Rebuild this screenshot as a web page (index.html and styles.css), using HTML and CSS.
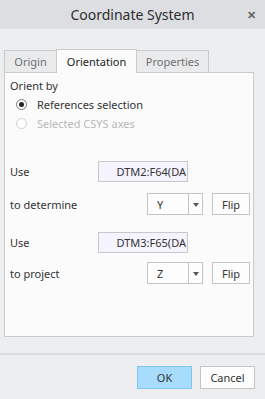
FILE: index.html
```html
<!DOCTYPE html>
<html>
<head>
<meta charset="utf-8">
<link rel="stylesheet" href="styles.css">
</head>
<body>
<div class="dialog">
  <div class="titlebar">
    <span class="title">Coordinate System</span>
    <span class="close">&#x2715;</span>
  </div>
  <div class="content">
    <div class="tabs">
      <div class="tab">Origin</div>
      <div class="tab active">Orientation</div>
      <div class="tab">Properties</div>
    </div>
    <div class="panel">
      <div class="legend">Orient by</div>
      <div class="radio-row"><span class="radio checked"></span><span>References selection</span></div>
      <div class="radio-row disabled"><span class="radio"></span><span>Selected CSYS axes</span></div>
      <div class="group first">
        <div class="row"><span class="label">Use</span><span class="input">DTM2:F64(DA</span></div>
        <div class="row row2"><span class="label">to determine</span><span class="select"><span class="val">Y</span><span class="arrow"></span></span><span class="btn">Flip</span></div>
      </div>
      <div class="group second">
        <div class="row"><span class="label">Use</span><span class="input">DTM3:F65(DA</span></div>
        <div class="row row2"><span class="label">to project</span><span class="select"><span class="val">Z</span><span class="arrow"></span></span><span class="btn">Flip</span></div>
      </div>
    </div>
  </div>
  <div class="footer">
    <span class="btn ok">OK</span>
    <span class="btn cancel">Cancel</span>
  </div>
</div>
</body>
</html>
```
FILE: styles.css
```css
html, body { margin: 0; padding: 0; }
body {
  width: 265px; height: 399px; overflow: hidden;
  background: #edeef0;
  font-family: "Noto Sans", "Open Sans", sans-serif;
  font-size: 11px;
  color: #333;
}
.dialog { display: flex; flex-direction: column; height: 399px; }
.titlebar {
  height: 29px; background: #dcdee1;
  display: flex; align-items: center; justify-content: center;
  position: relative;
}
.title { font-size: 14px; color: #2e2e2e; }
.close {
  position: absolute; right: 9px; top: 7px;
  font-size: 11px; font-weight: bold; color: #666;
}
.content { padding: 20px 11px 0 4px; }
.tabs { display: flex; height: 23px; align-items: flex-end; }
.tab {
  height: 22px; box-sizing: border-box;
  border: 1px solid #cbcbcb; border-bottom: none;
  background: #e9eaec; color: #707070;
  display: flex; align-items: center; justify-content: center;
  margin-right: -1px;
}
.tab:first-child { width: 53px; }
.tab.active {
  background: #fbfbfb; color: #222;
  position: relative; z-index: 1; margin-bottom: -1px; height: 24px;
  width: 81px;
}
.tab:last-child { width: 73px; }
.panel {
  height: 265px; box-sizing: border-box;
  border: 1px solid #cbcbcb; background: #fbfbfb;
  padding: 5px 0 0 5px;
}
.legend { height: 16px; line-height: 16px; }
.radio-row {
  display: flex; align-items: center; height: 19px; margin-left: 6px;
}
.radio-row:nth-child(2) { margin-top: 1px; }
.radio {
  width: 11px; height: 11px; box-sizing: border-box;
  border: 1px solid #777; border-radius: 50%; background: #fff;
  margin-right: 10px; position: relative;
}
.radio.checked::after {
  content: ""; position: absolute; left: 2px; top: 2px;
  width: 5px; height: 5px; border-radius: 50%; background: #222;
}
.disabled { color: #b8b8b8; }
.disabled .radio { border-color: #d0d0d0; }
.group.first { margin-top: 27px; }
.group.second { margin-top: 16px; }
.row { display: flex; align-items: center; height: 22px; }
.first .row2 { margin-top: 11px; }
.second .row2 { margin-top: 9px; }
.label { width: 88px; }
.input {
  width: 90px; height: 21px; box-sizing: border-box;
  border: 1px solid #c7c7cd; background: #f5f3fe;
  display: flex; align-items: center; justify-content: flex-end;
  padding-right: 1px; color: #333; overflow: hidden; white-space: nowrap;
}
.select {
  width: 56px; height: 22px; box-sizing: border-box;
  border: 1px solid #c4c4c4; background: #fdfdfd;
  display: flex; margin-left: 49px;
}
.val { width: 41px; box-sizing: border-box; padding-left: 9px; display: flex; align-items: center; border-right: 1px solid #c4c4c4; }
.arrow { flex: 1; position: relative; }
.arrow::after {
  content: ""; position: absolute; left: 4px; top: 9px;
  border-left: 3px solid transparent; border-right: 3px solid transparent;
  border-top: 4px solid #555;
}
.btn {
  height: 22px; box-sizing: border-box;
  border: 1px solid #c4c4c4; background: #fdfdfd;
  display: flex; align-items: center; justify-content: center;
}
.row .btn { width: 38px; margin-left: 9px; }
.footer {
  margin-top: 16px; border-top: 2px solid #d9dadc;
  display: flex; justify-content: flex-end; padding: 11px 10px 0 0; gap: 8px;
}
.footer .btn { width: 55px; height: 23px; }
.footer .ok { background: #a7dcfc; border-color: #7ec7f2; }
```
